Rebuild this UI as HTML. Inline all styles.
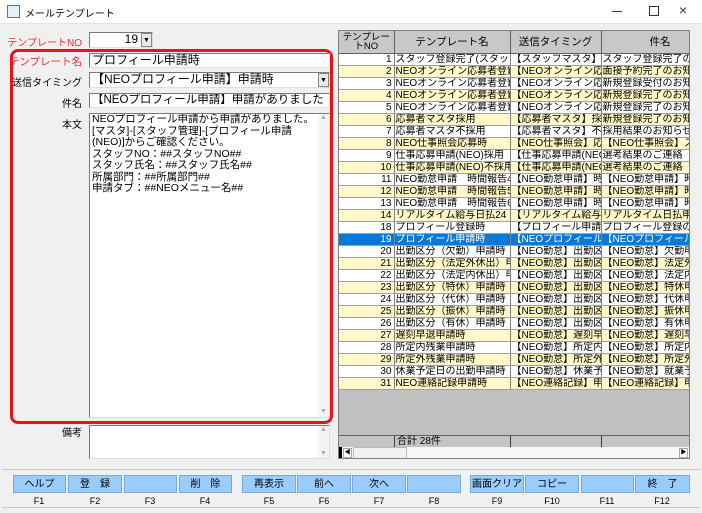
<!DOCTYPE html>
<html><head><meta charset="utf-8"><style>
*{box-sizing:border-box;margin:0;padding:0}
body{width:702px;height:513px;background:#f0f0f0;font-family:"Liberation Sans","Noto Sans CJK JP",sans-serif;font-size:12px;position:relative;overflow:hidden;color:#000}
.abs{position:absolute}
.title{left:0;top:0;width:702px;height:24px;background:#fff;border-bottom:1px solid #e4e4e4}
.lbl{position:absolute;text-align:right;width:82px;left:0px;font-size:10px;white-space:nowrap}
.red{color:#e83030}
.inp{position:absolute;background:#fff;border:1px solid #7a7a7a;border-right-color:#ddd;border-bottom-color:#ddd;white-space:nowrap;overflow:hidden;font-size:12px;line-height:13px;padding-left:2px}
.grid{left:338px;top:30px;width:352px;height:429px;background:#c0c0c0;border:1px solid #808080;overflow:hidden}
table{border-collapse:collapse;table-layout:fixed;font-size:10px}
td{height:11.64px;line-height:11px;border-right:1px solid #808080;border-bottom:1px solid #a0a0a0;white-space:nowrap;overflow:hidden;padding:0 1px}
th{font-weight:normal;background:#c8c8c8;border-right:1px solid #606060;border-bottom:1px solid #606060;height:22px;font-size:10.5px}
.y td{background:#fff8c8}.w td{background:#fff}
.s td{background:#0a78d7;color:#fff}
td.n{text-align:right;padding-right:2px}
.btn{position:absolute;top:475px;height:18px;background:#99ccff;border:1px solid #7aa8d8;text-align:center;font-size:10px;line-height:17px;white-space:nowrap;overflow:hidden}
.fk{position:absolute;top:496px;font-size:9px;text-align:center;width:54px}
</style></head><body>
<div class="abs title">
 <div class="abs" style="left:7px;top:5px;width:13px;height:13px;border:1px solid #3a78c8;background:#e8f0ff"></div>
 <div class="abs" style="left:25px;top:5px;font-size:10px">メールテンプレート</div>
 <div class="abs" style="left:612px;top:11px;width:10px;height:1px;background:#333"></div>
 <div class="abs" style="left:649px;top:6px;width:10px;height:10px;border:1px solid #333"></div>
 <div class="abs" style="left:679px;top:2px;font-size:14px;color:#333">×</div>
</div>
<div class="lbl red" style="top:34px">テンプレートNO</div>
<div class="inp" style="left:89px;top:32px;width:64px;height:16px;text-align:right;padding-right:14px">19</div>
<div class="abs" style="left:141px;top:33px;width:11px;height:14px;background:#e8e8e8;border:1px solid #888;font-size:7px;text-align:center;line-height:13px">▼</div>
<div class="abs" style="left:10px;top:49px;width:323px;height:375px;border:3px solid #e8141c;border-radius:8px"></div>
<div class="lbl red" style="top:54px;font-size:10.5px">テンプレート名</div>
<div class="inp" style="left:89px;top:53px;width:241px;height:15px">プロフィール申請時</div>
<div class="lbl" style="top:74px">送信タイミング</div>
<div class="inp" style="left:89px;top:72px;width:241px;height:16px">【NEOプロフィール申請】申請時</div>
<div class="abs" style="left:318px;top:73px;width:11px;height:14px;background:#e8e8e8;border:1px solid #888;font-size:7px;text-align:center;line-height:13px">▼</div>
<div class="lbl" style="top:95px">件名</div>
<div class="inp" style="left:89px;top:93px;width:241px;height:15px;font-size:11.5px">【NEOプロフィール申請】申請がありました</div>
<div class="lbl" style="top:116px">本文</div>
<div class="inp" style="left:89px;top:113px;width:241px;height:305px;white-space:normal;line-height:11.5px;padding-right:10px;font-size:10.5px">NEOプロフィール申請から申請がありました。<br>[マスタ]-[スタッフ管理]-[プロフィール申請(NEO)]からご確認ください。<br>スタッフNO：##スタッフNO##<br>スタッフ氏名：##スタッフ氏名##<br>所属部門：##所属部門##<br>申請タブ：##NEOメニュー名##</div>
<div class="abs" style="left:318px;top:114px;width:11px;height:303px;background:#f4f4f4;color:#aaa;font-size:7px;text-align:center">▲<div style="position:absolute;bottom:2px;width:11px">▼</div></div>
<div class="lbl" style="top:424px">備考</div>
<div class="inp" style="left:89px;top:425px;width:241px;height:34px"></div>
<div class="abs" style="left:318px;top:426px;width:11px;height:32px;background:#f4f4f4;color:#aaa;font-size:7px;text-align:center">▲<div style="position:absolute;bottom:1px;width:11px">▼</div></div>

<div class="abs grid">
<table style="width:380px">
<colgroup><col style="width:55px"><col style="width:116px"><col style="width:91px"><col style="width:118px"></colgroup>
<tr><th style="line-height:9px;font-size:9.5px">テンプレートNO</th><th>テンプレート名</th><th>送信タイミング</th><th>件名</th></tr>
<tr class="w"><td class="n">1</td><td>スタッフ登録完了(スタッ</td><td>【スタッフマスタ】:</td><td>スタッフ登録完了の</td></tr>
<tr class="y"><td class="n">2</td><td>NEOオンライン応募者登録</td><td>【NEOオンライン応募</td><td>面接予約完了のお知</td></tr>
<tr class="w"><td class="n">3</td><td>NEOオンライン応募者登録</td><td>【NEOオンライン応募</td><td>新規登録受付のお知</td></tr>
<tr class="y"><td class="n">4</td><td>NEOオンライン応募者登録</td><td>【NEOオンライン応募</td><td>新規登録完了のお知</td></tr>
<tr class="w"><td class="n">5</td><td>NEOオンライン応募者登録</td><td>【NEOオンライン応募</td><td>新規登録完了のお知</td></tr>
<tr class="y"><td class="n">6</td><td>応募者マスタ採用</td><td>【応募者マスタ】採</td><td>新規登録完了のお知</td></tr>
<tr class="w"><td class="n">7</td><td>応募者マスタ不採用</td><td>【応募者マスタ】不</td><td>採用結果のお知らせ</td></tr>
<tr class="y"><td class="n">8</td><td>NEO仕事照会応募時</td><td>【NEO仕事照会】応募</td><td>【NEO仕事照会】スタ</td></tr>
<tr class="w"><td class="n">9</td><td>仕事応募申請(NEO)採用</td><td>【仕事応募申請(NEO</td><td>選考結果のご連絡</td></tr>
<tr class="y"><td class="n">10</td><td>仕事応募申請(NEO)不採用</td><td>【仕事応募申請(NEO</td><td>選考結果のご連絡</td></tr>
<tr class="w"><td class="n">11</td><td>NEO勤怠申請　時間報告4</td><td>【NEO勤怠申請】時間</td><td>【NEO勤怠申請】時間</td></tr>
<tr class="y"><td class="n">12</td><td>NEO勤怠申請　時間報告5</td><td>【NEO勤怠申請】時間</td><td>【NEO勤怠申請】時間</td></tr>
<tr class="w"><td class="n">13</td><td>NEO勤怠申請　時間報告6</td><td>【NEO勤怠申請】時間</td><td>【NEO勤怠申請】時間</td></tr>
<tr class="y"><td class="n">14</td><td>リアルタイム給与日払24</td><td>【リアルタイム給与日払24</td><td>リアルタイム日払申請</td></tr>
<tr class="w"><td class="n">18</td><td>プロフィール登録時</td><td>【プロフィール申請</td><td>プロフィール登録の</td></tr>
<tr class="s"><td class="n">19</td><td>プロフィール申請時</td><td>【NEOプロフィール申</td><td>【NEOプロフィール申</td></tr>
<tr class="w"><td class="n">20</td><td>出勤区分（欠勤）申請時</td><td>【NEO勤怠】出勤区分</td><td>【NEO勤怠】欠勤申請</td></tr>
<tr class="y"><td class="n">21</td><td>出勤区分（法定外休出）申</td><td>【NEO勤怠】出勤区分</td><td>【NEO勤怠】法定外休</td></tr>
<tr class="w"><td class="n">22</td><td>出勤区分（法定内休出）申</td><td>【NEO勤怠】出勤区分</td><td>【NEO勤怠】法定内休</td></tr>
<tr class="y"><td class="n">23</td><td>出勤区分（特休）申請時</td><td>【NEO勤怠】出勤区分</td><td>【NEO勤怠】特休申請</td></tr>
<tr class="w"><td class="n">24</td><td>出勤区分（代休）申請時</td><td>【NEO勤怠】出勤区分</td><td>【NEO勤怠】代休申請</td></tr>
<tr class="y"><td class="n">25</td><td>出勤区分（振休）申請時</td><td>【NEO勤怠】出勤区分</td><td>【NEO勤怠】振休申請</td></tr>
<tr class="w"><td class="n">26</td><td>出勤区分（有休）申請時</td><td>【NEO勤怠】出勤区分</td><td>【NEO勤怠】有休申請</td></tr>
<tr class="y"><td class="n">27</td><td>遅刻早退申請時</td><td>【NEO勤怠】遅刻早退</td><td>【NEO勤怠】遅刻早退</td></tr>
<tr class="w"><td class="n">28</td><td>所定内残業申請時</td><td>【NEO勤怠】所定内残</td><td>【NEO勤怠】所定内残</td></tr>
<tr class="y"><td class="n">29</td><td>所定外残業申請時</td><td>【NEO勤怠】所定外残</td><td>【NEO勤怠】所定外残</td></tr>
<tr class="w"><td class="n">30</td><td>休業予定日の出勤申請時</td><td>【NEO勤怠】休業予定</td><td>【NEO勤怠】就業予定</td></tr>
<tr class="y"><td class="n">31</td><td>NEO連絡記録申請時</td><td>【NEO連絡記録】申請</td><td>【NEO連絡記録】申請</td></tr>
</table>
<div class="abs" style="left:0;top:404px;width:352px;height:12px;border-top:1px solid #606060;background:#c4c4c4;font-size:10px;line-height:11px">
 <div class="abs" style="left:55px;top:0;height:12px;border-left:1px solid #404040;padding-left:2px">合計 28件</div>
 <div class="abs" style="left:171px;top:0;height:12px;border-left:1px solid #404040"></div>
 <div class="abs" style="left:262px;top:0;height:12px;border-left:1px solid #404040"></div>
</div>
<div class="abs" style="left:0;top:416px;width:352px;height:12px;background:#f8f8f8">
 <div class="abs" style="left:0;top:0;width:3px;height:12px;background:#000"></div>
 <div class="abs" style="left:4px;top:1px;width:9px;height:10px;background:#fff;border:1px solid #aaa;font-size:6px;line-height:9px;text-align:center">◀</div>
 <div class="abs" style="left:14px;top:0;width:54px;height:12px;background:#f0f0f0;border:1px solid #bbb"></div>
 <div class="abs" style="left:340px;top:1px;width:9px;height:10px;background:#fff;border:1px solid #aaa;font-size:6px;line-height:9px;text-align:center">▶</div>
</div>
</div>

<div class="abs" style="left:2px;top:469px;width:698px;height:39px;border-top:1px solid #c8c8c8;border-bottom:1px solid #c8c8c8"></div>
<div class="btn" style="left:13px;width:53px">ヘルプ</div>
<div class="btn" style="left:68px;width:54px">登　録</div>
<div class="btn" style="left:124px;width:53px"></div>
<div class="btn" style="left:179px;width:53px">削　除</div>
<div class="btn" style="left:242px;width:54px">再表示</div>
<div class="btn" style="left:297px;width:54px">前へ</div>
<div class="btn" style="left:352px;width:54px">次へ</div>
<div class="btn" style="left:407px;width:54px"></div>
<div class="btn" style="left:470px;width:54px">画面クリア</div>
<div class="btn" style="left:525px;width:54px">コピー</div>
<div class="btn" style="left:581px;width:53px"></div>
<div class="btn" style="left:635px;width:55px">終　了</div>
<div class="fk" style="left:12px">F1</div><div class="fk" style="left:68px">F2</div><div class="fk" style="left:123px">F3</div><div class="fk" style="left:178px">F4</div>
<div class="fk" style="left:242px">F5</div><div class="fk" style="left:297px">F6</div><div class="fk" style="left:352px">F7</div><div class="fk" style="left:407px">F8</div>
<div class="fk" style="left:470px">F9</div><div class="fk" style="left:525px">F10</div><div class="fk" style="left:580px">F11</div><div class="fk" style="left:635px">F12</div>
</body></html>
